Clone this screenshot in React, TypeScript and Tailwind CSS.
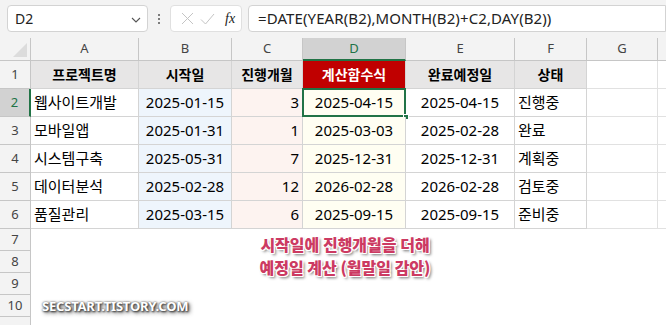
import React from "react";

const cols = ["A", "B", "C", "D", "E", "F", "G"];
const colW = ["w-[108px]", "w-[93px]", "w-[71px]", "w-[103px]", "w-[109px]", "w-[72px]", "w-[71px]"];

type Row = [string, string, string, string, string, string];
const data: Row[] = [
  ["웹사이트개발", "2025-01-15", "3", "2025-04-15", "2025-04-15", "진행중"],
  ["모바일앱", "2025-01-31", "1", "2025-03-03", "2025-02-28", "완료"],
  ["시스템구축", "2025-05-31", "7", "2025-12-31", "2025-12-31", "계획중"],
  ["데이터분석", "2025-02-28", "12", "2026-02-28", "2026-02-28", "검토중"],
  ["품질관리", "2025-03-15", "6", "2025-09-15", "2025-09-15", "준비중"],
];

const font = { fontFamily: "'Noto Sans', 'Noto Sans CJK KR', sans-serif" };

function RowHead({ n, h, active }: { n: number | null; h: string; active?: boolean }) {
  return (
    <div
      className={`w-[31px] ${h} shrink-0 flex items-center justify-center text-[13px] border-b border-r ${
        active ? "bg-[#d2d2d2] text-[#217346] border-r-[#217346] border-r-2 border-b-[#c6c6c6]" : "bg-[#f3f3f3] text-[#444] border-[#c6c6c6]"
      }`}
    >
      {n}
    </div>
  );
}

export default function App() {
  return (
    <div className="relative w-[666px] h-[325px] overflow-hidden bg-white text-black" style={font}>
      {/* formula bar */}
      <div className="h-[38px] bg-[#f3f3f3] flex items-start pt-[5px] pl-[7px]">
        <div className="w-[141px] h-[27px] bg-white border border-[#d3d3d3] rounded-[4px] flex items-center justify-between pl-[7px] pr-[6px]">
          <span className="text-[14px] text-[#222]">D2</span>
          <svg width="10" height="6" viewBox="0 0 10 6" className="mt-[2px]">
            <path d="M1 1l4 4 4-4" fill="none" stroke="#555" strokeWidth="1.1" />
          </svg>
        </div>
        <div className="w-[22px] h-[27px] flex flex-col items-center justify-center gap-[2px]">
          <span className="w-[2px] h-[2px] bg-[#555] rounded-full" />
          <span className="w-[2px] h-[2px] bg-[#555] rounded-full" />
          <span className="w-[2px] h-[2px] bg-[#555] rounded-full" />
        </div>
        <div className="w-[72px] h-[27px] bg-white border border-[#e0e0e0] rounded-[4px] flex items-center pl-[10px] gap-[6px]">
          <svg width="13" height="13" viewBox="0 0 13 13">
            <path d="M1 1l11 11M12 1L1 12" stroke="#c4c4c4" strokeWidth="1" />
          </svg>
          <svg width="15" height="12" viewBox="0 0 15 12">
            <path d="M1 6.5l4.5 4.5L14 1" fill="none" stroke="#c4c4c4" strokeWidth="1" />
          </svg>
          <span className="ml-[4px] text-[14px] italic text-[#222]" style={{ fontFamily: "'Liberation Serif', serif" }}>
            fx
          </span>
        </div>
        <div className="ml-[6px] flex-1 h-[27px] bg-white border border-[#d3d3d3] rounded-l-[4px] flex items-center pl-[9px] text-[15px] text-[#222] tracking-[0.1px]">
          =DATE(YEAR(B2),MONTH(B2)+C2,DAY(B2))
        </div>
      </div>

      {/* column header */}
      <div className="flex h-[23px]">
        <div className="w-[31px] shrink-0 bg-[#f3f3f3] border-r border-b border-[#c6c6c6] relative">
          <div className="absolute right-[3px] bottom-[3px] w-0 h-0 border-l-[14px] border-l-transparent border-b-[14px] border-b-[#dcdcdc]" />
        </div>
        {cols.map((c, i) =>
          c === "D" ? (
            <div
              key={c}
              className={`${colW[i]} shrink-0 bg-[#d2d2d2] border-r border-[#c6c6c6] border-b-2 border-b-[#217346] flex items-center justify-center text-[13px] text-[#217346]`}
            >
              {c}
            </div>
          ) : (
            <div
              key={c}
              className={`${colW[i]} shrink-0 bg-[#f3f3f3] border-r border-b border-[#c6c6c6] flex items-center justify-center text-[13px] text-[#444]`}
            >
              {c}
            </div>
          )
        )}
        <div className="flex-1 bg-[#f3f3f3] border-b border-[#c6c6c6]" />
      </div>

      {/* row 1 */}
      <div className="flex h-[28px]">
        <RowHead n={1} h="h-[28px]" />
        {["프로젝트명", "시작일", "진행개월", "계산함수식", "완료예정일", "상태"].map((t, i) => (
          <div
            key={t}
            className={`${colW[i]} shrink-0 border-r border-b border-[#d4d4d4] flex items-center justify-center text-[14px] font-bold ${
              i === 3 ? "bg-[#c00000] text-white" : "bg-[#e7e6e6] text-black"
            }`}
          >
            {t}
          </div>
        ))}
        <div className="w-[71px] shrink-0 border-r border-b border-[#e1e1e1]" />
        <div className="flex-1 border-b border-[#e1e1e1]" />
      </div>

      {/* data rows */}
      {data.map((r, ri) => (
        <div key={ri} className="flex h-[28px]">
          <RowHead n={ri + 2} h="h-[28px]" active={ri === 0} />
          <div className={`${colW[0]} shrink-0 border-r border-b border-[#d4d4d4] flex items-center pl-[3px] text-[15px]`}>{r[0]}</div>
          <div className={`${colW[1]} shrink-0 border-r border-b border-[#d4d4d4] bg-[#eef5fc] flex items-center justify-center text-[15px]`}>{r[1]}</div>
          <div className={`${colW[2]} shrink-0 border-r border-b border-[#d4d4d4] bg-[#fdf3f0] flex items-center justify-end pr-[3px] text-[15px]`}>{r[2]}</div>
          <div className={`${colW[3]} shrink-0 border-r border-b border-[#d4d4d4] bg-[#fffef2] flex items-center justify-center text-[15px] relative`}>
            {r[3]}
            {ri === 0 && (
              <>
                <div className="absolute left-[-1px] top-[-1px] right-[-1px] bottom-[-1px] border-2 border-[#217346]" />
                <div className="absolute right-[-4px] bottom-[-4px] w-[6px] h-[6px] bg-[#217346] border border-white" />
              </>
            )}
          </div>
          <div className={`${colW[4]} shrink-0 border-r border-b border-[#d4d4d4] flex items-center justify-center text-[15px]`}>{r[4]}</div>
          <div className={`${colW[5]} shrink-0 border-r border-b border-[#d4d4d4] flex items-center pl-[3px] text-[15px]`}>{r[5]}</div>
          <div className="w-[71px] shrink-0 border-r border-b border-[#e1e1e1]" />
          <div className="flex-1 border-b border-[#e1e1e1]" />
        </div>
      ))}

      {/* empty rows */}
      {[7, 8, 9, 10, null].map((n, i) => (
        <div key={i} className="flex h-[22px]">
          <RowHead n={n} h="h-[22px]" />
          <div className="flex-1" />
        </div>
      ))}

      {/* annotation */}
      <div
        className="absolute left-[200px] w-[290px] top-[233px] text-center text-[16px] font-black leading-[23px] text-[#cc3a62]"
        style={{
          fontFamily: "'Noto Sans CJK KR', sans-serif",
          textShadow:
            "1px 0 0 #fff, -1px 0 0 #fff, 0 1px 0 #fff, 0 -1px 0 #fff, 1px 1px 0 #fff, -1px -1px 0 #fff, 1px -1px 0 #fff, -1px 1px 0 #fff, 2px 2px 3px rgba(0,0,0,0.6)",
        }}
      >
        <div>시작일에 진행개월을 더해</div>
        <div>예정일 계산 (월말일 감안)</div>
      </div>

      {/* watermark */}
      <div
        className="absolute left-[42px] top-[297px] text-[13px] font-bold text-white tracking-[-0.2px]"
        style={{
          fontFamily: "'Noto Sans', sans-serif",
          textShadow: "0 0 2px #555, 1px 1px 2px #333, 2px 2px 4px rgba(0,0,0,0.7)",
        }}
      >
        SECSTART.TISTORY.COM
      </div>
    </div>
  );
}
